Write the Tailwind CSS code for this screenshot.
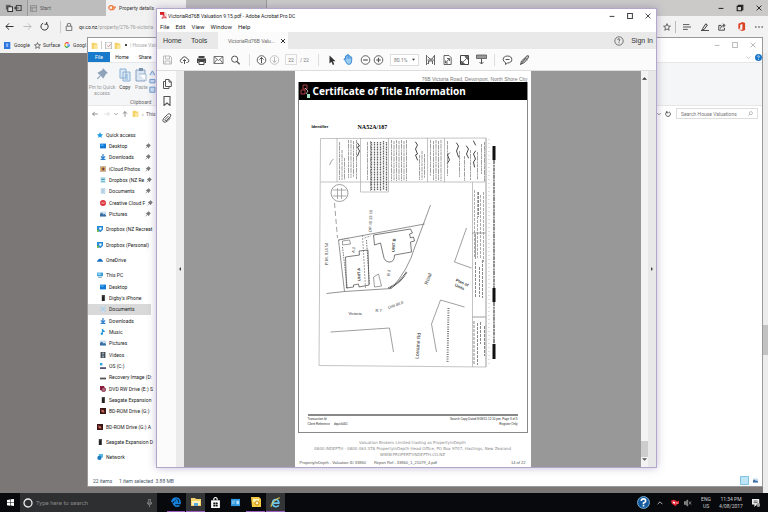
<!DOCTYPE html>
<html lang="en">
<head>
<meta charset="utf-8">
<title>Desktop</title>
<script src="https://cdn.jsdelivr.net/npm/@tailwindcss/browser@4"></script>
</head>
<body class="h-screen overflow-hidden bg-[#7b7777] font-['Roboto','Liberation_Sans',sans-serif] text-[5px] leading-[8px] text-[#222]">
<svg width="0" height="0" class="absolute" aria-hidden="true">
  <defs>
    <symbol id="folder" viewBox="0 0 10 10"><path d="M1 1h4l1 1h3v8H1z" fill="#f3d064"/><path d="M4 4h5v6H4z" fill="#fbe69a"/></symbol>
    <symbol id="back" viewBox="0 0 10 10"><path d="M9.500 5H1M4.500 1.500L1 5l3.500 3.500" fill="none" stroke="currentColor" stroke-width="1.100"/></symbol>
    <symbol id="star" viewBox="0 0 10 10"><path d="M5 .8l1.200 3 3.100.2-2.400 2 .8 3.100L5 7.400 2.300 9.100l.8-3.100-2.400-2 3.100-.2z" fill="none" stroke="currentColor" stroke-width=".9"/></symbol>
    <symbol id="min" viewBox="0 0 10 10"><path d="M2 5.500h6" stroke="currentColor" stroke-width="1.300"/></symbol>
    <symbol id="max" viewBox="0 0 10 10"><path d="M2 2h6v6H2z" fill="none" stroke="currentColor" stroke-width="1.300"/></symbol>
    <symbol id="close" viewBox="0 0 10 10"><path d="M2 2l6 6M8 2L2 8" stroke="currentColor" stroke-width="1.200"/></symbol>
    <symbol id="search" viewBox="0 0 12 12"><circle cx="5" cy="5" r="3.700" fill="none" stroke="currentColor" stroke-width="1.200"/><path d="M7.800 7.800L11 11" stroke="currentColor" stroke-width="1.600"/></symbol>
    <symbol id="pin" viewBox="0 0 10 10"><path d="M6 1l3 3-1 .5L6.500 7 6 8 2 4l1-.5L5.500 2zM3.500 6.500L1 9" fill="currentColor" stroke="currentColor" stroke-width="1"/></symbol>
    <symbol id="desk" viewBox="0 0 10 10"><path d="M0 1h10v8H0z" fill="#1379d3"/><path d="M1 2h5v3H1z" fill="#3ba4ee"/></symbol>
    <symbol id="down" viewBox="0 0 10 10"><path d="M5 0v6M1.500 4L5 7.500 8.500 4M1 9h8" fill="none" stroke="#2d7fcb" stroke-width="2"/></symbol>
    <symbol id="doc" viewBox="0 0 10 10"><path d="M2 0h6v10H2z" fill="#e7f1f8" stroke="#98b8cc" stroke-width=".8"/><path d="M3 3h4M3 5h4M3 7h4" stroke="#5796c4" stroke-width=".8"/></symbol>
    <symbol id="pic" viewBox="0 0 10 10"><path d="M0 1h10v8H0z" fill="#c9dcec"/><path d="M0 9V5l3-2 3 3 2-1 2 2v2z" fill="#376fa6"/></symbol>
    <symbol id="dbx" viewBox="0 0 10 10"><path d="M0 0h10v6L6 10 0 8z" fill="#2389d8"/><path d="M3 2l2 1 2-1 1 3-3 2-1-2z" fill="#fff"/><path d="M0 6h3v4H0z" fill="#79b84b"/></symbol>
    <symbol id="hdd" viewBox="0 0 10 10"><path d="M3 0h5v10H3z" fill="#222"/><path d="M4 1h2v1H4z" fill="#aaa"/></symbol>
    <symbol id="drv" viewBox="0 0 10 10"><path d="M0 6h10v3H0z" fill="#555"/><path d="M1 5h8v1H1z" fill="#b8b8b8"/></symbol>
    <symbol id="bd" viewBox="0 0 10 10"><path d="M0 0h10v10H0z" fill="#3a1717"/><path d="M2 2l4 2 2 3-3 1-3-2z" fill="#b94a3b"/><path d="M4 4h2v2H4z" fill="#e8c6a8"/></symbol>
  </defs>
</svg>

<div class="relative flex h-full flex-col">
  <!-- Edge browser -->
  <section class="flex min-h-0 flex-1 flex-col" aria-label="Browser">
    <div class="flex h-4 shrink-0 items-center bg-[#cbcac9] text-[#555]">
      <div class="flex h-full w-[28px] items-center justify-around border-r border-[#999] bg-[#b9b9b9] px-1">
        <svg class="size-2" viewBox="0 0 10 10"><path d="M1 1h6v6H1z" fill="#666"/><path d="M3.500 3.500h6v6h-6z" fill="#ddd" stroke="#333" stroke-width="1.400"/></svg>
        <svg class="size-2" viewBox="0 0 10 10"><path d="M3 2h6v6H3zM0 5h6M3 3L1 5l2 2" fill="none" stroke="#444" stroke-width="1.300"/></svg>
      </div>
      <div class="flex h-full w-[78px] items-center gap-[3px] bg-[#bdbdbd] px-[2px]">
        <svg class="size-[7px]" viewBox="0 0 10 10"><path d="M.5 1h9v8h-9zM.5 4h9M3 4v5" fill="none" stroke="#777"/></svg>
        <span>Start</span>
      </div>
      <div class="flex h-full w-[80px] items-center gap-[3px] overflow-hidden bg-[#f1f1f1] px-[2px] whitespace-nowrap">
        <svg class="size-2 shrink-0" viewBox="0 0 10 10"><path d="M1 5q0-3 3-3t2 3-3 2-2-2M5 7q2 1 4-3H5" fill="none" stroke="#ee7d40" stroke-width="1.500"/></svg>
        <span class="text-[#333]">Property details</span>
      </div>
      <div class="h-full w-[81px] border-r border-[#999] bg-[#bdbdbd]"></div>
      <div class="ml-auto flex gap-[11px] pr-[5px] text-[#222]">
        <button aria-label="Minimize"><svg class="size-2"><use href="#min"/></svg></button>
        <button aria-label="Restore"><svg class="size-2" viewBox="0 0 10 10"><path d="M1.500 3h5.500v5.500H1.500zM3 3V1.500h5.500V7H7" fill="none" stroke="currentColor" stroke-width="1.400"/></svg></button>
        <button aria-label="Close"><svg class="size-2"><use href="#close"/></svg></button>
      </div>
    </div>
    <div class="flex h-[21px] shrink-0 items-center bg-[#f2f2f2] px-[5px] text-[#333]">
      <button aria-label="Back"><svg class="size-[9px]"><use href="#back"/></svg></button>
      <button aria-label="Forward" class="ml-[9px] text-[#bbb]"><svg class="size-[9px] rotate-180"><use href="#back"/></svg></button>
      <button aria-label="Refresh" class="ml-2"><svg class="size-[9px]" viewBox="0 0 10 10"><path d="M3.500 1.300A4 4 0 1 0 7 1.500M7.500 0v2.500H5" fill="none" stroke="currentColor" stroke-width="1.100"/></svg></button>
      <span class="ml-[11px] h-3 w-px bg-[#ccc]"></span>
      <svg class="ml-1 size-2" viewBox="0 0 10 10"><path d="M1.500 4h7v5.500h-7zM3 4V1q2-1.500 4 0v3" fill="none" stroke="#666" stroke-width="1.100"/></svg>
      <a href="#" class="ml-[6px] text-[#222]">qv.co.nz<span class="text-[#999]">/property/276-76-victoria</span></a>
      <div class="ml-auto flex items-center gap-2">
        <svg class="size-2"><use href="#star"/></svg>
        <span class="-mx-1 h-3 w-px bg-[#bbb]"></span>
        <svg class="ml-[3px] size-2" viewBox="0 0 10 10"><path d="M0 2h8M0 5h10M0 8h6" stroke="currentColor"/></svg>
        <svg class="ml-[2px] size-2" viewBox="0 0 10 10"><path d="M2 7l4-6 2 1.500L4 8H1.500L0 9.500h10" fill="none" stroke="currentColor" stroke-width="1.200"/></svg>
        <svg class="ml-px size-2" viewBox="0 0 10 10"><path d="M4 3H1v6h7V6M3 7q0-4 5-4M6 1l3 2-3 2.500" fill="none" stroke="currentColor" stroke-width="1.100"/></svg>
        <svg class="ml-[3px] size-[9px]" viewBox="0 0 10 10"><path d="M1.500 2L6 0l3 1v8l-3 1-4.500-1.500L6 8.700V2.200L3.500 3v4l-2 1z" fill="#dc4326"/></svg>
        <svg class="ml-px size-2" viewBox="0 0 10 10"><path d="M0 5h2M4 5h2M8 5h2" stroke="currentColor" stroke-width="1.300"/></svg>
      </div>
    </div>
    <div class="flex h-4 shrink-0 items-center bg-[#f2f2f2] pl-1 text-[#333]">
      <svg class="size-[7px]" viewBox="0 0 10 10"><path d="M0 0h9v10H0z" fill="#2e76e0"/><path d="M3 2h3v5H3z" fill="#8eb9f7"/></svg>
      <a href="#" class="ml-[3px] w-5">Google</a>
      <svg class="size-[7px]"><use href="#star"/></svg>
      <a href="#" class="ml-[2px] w-[21px]">Surface</a>
      <svg class="size-[6px]" viewBox="0 0 10 10" fill="none" stroke-width="2"><path d="M8 2Q4-.5 2 3" stroke="#e44"/><path d="M2 3q-1 2 0 4" stroke="#f5b400"/><path d="M2 7q2 3 5 1" stroke="#3a4"/><path d="M5 5h4q0 2-2 3" stroke="#48f"/></svg>
      <a href="#" class="ml-[3px]">Googl</a>
    </div>
    <div class="flex min-h-0 flex-1 flex-col items-end bg-[#7b7777]">
      <div class="flex w-[5px] flex-1 flex-col bg-[#ececec] pt-[272px]"><span class="h-[30px] bg-[#c2c2c2]"></span></div>
    </div>
  </section>

  <!-- Taskbar -->
  <footer class="flex h-[19px] shrink-0 items-center bg-[#08090c] text-[#ccc]">
    <button aria-label="Start" class="flex h-full w-5 items-center justify-center"><svg class="size-[7px]" viewBox="0 0 10 10"><path d="M0 1.300l4.500-.7v4.200H0zM5.200.5L10 0v4.800H5.200zM0 5.400h4.500v4.200L0 9zM5.200 5.400H10V10l-4.800-.6z" fill="#fff"/></svg></button>
    <div class="flex h-full w-[137px] items-center bg-[#2e2f31] px-[3px]">
      <svg class="size-[10px]" viewBox="0 0 10 10"><circle cx="5" cy="5" r="4" fill="none" stroke="#eee" stroke-width="1.300"/></svg>
      <input aria-label="Type here to search" placeholder="Type here to search" class="ml-[3px] min-w-0 flex-1 bg-transparent text-[6px] placeholder:text-[#888]">
      <svg class="mr-[2px] h-2 w-[5px]" viewBox="0 0 6 10"><path d="M2 0h2v6H2zM.5 4v2q2.500 3 5 0V4M3 8v2" fill="none" stroke="#aaa" stroke-width=".8"/></svg>
    </div>
    <nav class="ml-[10px] flex h-full gap-px">
      <button aria-label="Edge" class="flex w-[18px] items-center justify-center border-b border-[#9a5fc0]"><svg class="size-[10px]" viewBox="0 0 10 10"><path d="M8.500 8.500Q4 10.500 2.500 6.500H9Q9.300 1 5 1 1.500 1 .8 5 3 2.200 5 2.800 6.500 3.300 6.500 5H3" fill="none" stroke="#1580dc" stroke-width="1.700"/></svg></button>
      <button aria-label="File Explorer" class="flex w-[19px] items-center justify-center border-b border-[#9a5fc0] bg-[#333436]"><svg class="size-[10px]" viewBox="0 0 10 10"><path d="M0 1h4l1 1h5v7H0z" fill="#f5d56b"/><path d="M1 4h8v4H1z" fill="#fcf1bd"/><path d="M3 6h4v3H3z" fill="#5ba9d8"/></svg></button>
      <button aria-label="Store" class="flex w-[19px] items-center justify-center"><svg class="size-[11px]" viewBox="0 0 10 10"><path d="M1 3h8v7H1z" fill="#fff"/><path d="M3.500 3V1.500Q5-.5 6.500 1.500V3" fill="none" stroke="#fff"/><path d="M3 5h1.800v1.700H3zM5.200 5H7v1.700H5.200zM3 7h1.800v1.700H3zM5.200 7H7v1.700H5.200z" fill="#111"/></svg></button>
      <button aria-label="Mail" class="flex w-[19px] items-center justify-center"><svg class="size-[9px]" viewBox="0 0 10 10"><path d="M0 1h10v8H0z" fill="#2f97df"/><path d="M1 3h4v1H1zM1 5h3v1H1zM6 3h3v4H6z" fill="#b4ddf8"/></svg></button>
      <button aria-label="Outlook" class="flex w-[19px] items-center justify-center border-b border-[#9a5fc0]"><svg class="size-[10px]" viewBox="0 0 10 10"><path d="M0 0h8l2 2v8H1z" fill="#f6c944"/><path d="M2 2h6v3H2z" fill="#fff3b5"/><circle cx="6" cy="6" r="2" fill="#fdf0b8" stroke="#c58d18"/></svg></button>
      <button aria-label="Internet Explorer" class="flex w-[19px] items-center justify-center border-b border-[#9a5fc0] bg-[#333436]"><svg class="size-[11px]" viewBox="0 0 10 10"><path d="M8 7.500Q6.500 9.300 4.500 8.700 2.300 8 2.300 5.500 2.500 2.500 5 2.300 8 2.300 8 5.500H3" fill="none" stroke="#67c7ef" stroke-width="1.500"/><path d="M1 9Q0 7 4 3.500T9 1" fill="none" stroke="#f0d24a" stroke-width=".9"/></svg></button>
    </nav>
    <div class="ml-auto flex h-full items-center gap-1 pr-2 leading-[7px]">
      <svg class="size-[13px]" viewBox="0 0 12 12"><circle cx="6" cy="6" r="5.500" fill="#155c9f" stroke="#8dbbe0" stroke-width=".8"/><path d="M4 4.500Q4 2.700 6 2.700T8 4.500Q8 5.500 6 6.500v1M6 8.300v1.500" fill="none" stroke="#fff" stroke-width="1.500"/></svg>
      <svg class="ml-[3px] size-[6px]" viewBox="0 0 10 10"><path d="M1 7l4-4 4 4" fill="none" stroke="#ccc" stroke-width="1.400"/></svg>
      <svg class="ml-1 size-2" viewBox="0 0 10 10"><path d="M0 2l4-1 4 2 2-1v4L7 7l-1 2-5-3z" fill="#e32a36"/><path d="M3 3l2 1v2L2 5zM6 5l2-1v2z" fill="#fff"/></svg>
      <svg class="ml-px size-2" viewBox="0 0 10 10"><path d="M0 3.500h2L4.500 1v8L2 6.500H0zM6 3l3 4M9 3L6 7" fill="#777" stroke="#999" stroke-width=".9"/></svg>
      <div class="ml-[5px] w-[10px] text-center">ENG<br>US</div>
      <div class="ml-1 w-6 text-center">11:34&nbsp;PM<br>4/08/2017</div>
      <svg class="ml-[5px] size-2" viewBox="0 0 10 10"><path d="M0 0h9v7H6L3 10V7H0z" fill="#eee"/><path d="M2 2.500h5M2 4.500h5" stroke="#444"/><circle cx="8" cy="7.500" r="2.400" fill="#999"/></svg>
    </div>
  </footer>

  <!-- File Explorer window -->
  <section class="absolute top-[37px] right-[5px] bottom-[25px] left-[87px] flex flex-col border border-[#999] bg-white" aria-label="File Explorer">
    <div class="flex h-[14px] items-center pl-[3px] text-[#aaa]">
      <svg class="size-[7px]"><use href="#folder"/></svg><span class="mx-[3px] h-2 w-px bg-[#ccc]"></span>
      <svg class="size-[7px]" viewBox="0 0 10 10"><path d="M1 0h8v10H1z" fill="#fff" stroke="#999"/><path d="M3 5l2 2 3-4" fill="none" stroke="#c66"/></svg>
      <svg class="ml-[2px] size-[7px]"><use href="#folder"/></svg>
      <span class="ml-1 size-[2px] bg-[#444]"></span><span class="ml-[3px] whitespace-nowrap">| House Valu</span>
      <div class="ml-auto flex gap-[10px] pr-[5px] text-[#bbb]">
        <button aria-label="Minimize"><svg class="size-2"><use href="#min"/></svg></button>
        <button aria-label="Maximize"><svg class="size-2"><use href="#max"/></svg></button>
        <button aria-label="Close"><svg class="size-2"><use href="#close"/></svg></button>
      </div>
    </div>
    <div class="flex h-[10px] items-center">
      <button class="h-full w-[22px] bg-[#1979ca] text-white">File</button>
      <button class="h-full w-6">Home</button>
      <button class="h-full w-[22px]">Share</button>
      <svg class="mr-1 ml-auto size-[5px]" viewBox="0 0 10 10"><path d="M1 3l4 4 4-4" fill="none" stroke="#999"/></svg>
      <svg class="size-[7px]" viewBox="0 0 10 10"><circle cx="5" cy="5" r="5" fill="#1976c9"/><path d="M3.500 4Q4 2 5.500 2.500T5 6M5 7v1.200" fill="none" stroke="#fff"/></svg>
    </div>
    <div class="flex h-11 border-y border-[#e6e7e8] bg-[#f5f6f7] pt-[5px] leading-[6px] text-[#999]">
      <div class="flex w-[28px] flex-col items-center text-center"><svg class="size-3 text-[#8ea3ba]"><use href="#pin"/></svg><span class="mt-1 whitespace-nowrap">Pin to Quick<br>access</span></div>
      <div class="flex w-[40px] flex-col">
        <div class="flex">
          <div class="flex w-[18px] flex-col items-center text-[#333]"><svg class="h-[14px] w-3" viewBox="0 0 12 14"><path d="M1 1h6v9H1zM4 4h7v9H4z" fill="#dceaf7" stroke="#8bb0d3"/><path d="M6 7h3M6 9h3M6 11h3" stroke="#8bb0d3"/></svg><span class="mt-[2px]">Copy</span></div>
          <div class="flex w-4 flex-col items-center"><svg class="h-[14px] w-3" viewBox="0 0 12 14"><path d="M1 2h9v11H1z" fill="#dbe6f3" stroke="#8ba2be"/><path d="M4 0h4v3H4z" fill="#7b91ad"/><path d="M4 6h7v7" fill="#fff" stroke="#9bb4cf"/></svg><span class="mt-[2px]">Paste</span></div>
          <svg class="h-7 w-[7px]" viewBox="0 0 8 28"><path d="M1 6l3-5 3 5M1 11h6v4H1zM1 20h6v6H1z" fill="#cfe0f2" stroke="#5f91c4"/></svg>
        </div>
        <span class="mt-[3px] pl-[14px] text-[#666]">Clipboard</span>
      </div>
    </div>
    <div class="flex h-[15px] shrink-0 items-center pl-1 text-[#555]">
      <svg class="size-[6px]"><use href="#back"/></svg>
      <svg class="ml-[6px] size-[6px] rotate-180 text-[#ccc]"><use href="#back"/></svg>
      <svg class="ml-1 size-1" viewBox="0 0 10 10"><path d="M1 3l4 4 4-4" fill="none" stroke="#888" stroke-width="2"/></svg>
      <svg class="ml-1 size-[6px] rotate-90"><use href="#back"/></svg>
      <svg class="ml-1 size-[7px]"><use href="#folder"/></svg>
      <span class="ml-[3px] whitespace-nowrap">› &nbsp;This</span>
      <span class="ml-auto flex items-center gap-1"><svg class="size-1" viewBox="0 0 10 10"><path d="M1 3l4 4 4-4" fill="none" stroke="#666" stroke-width="2"/></svg>
      <svg class="size-[6px]" viewBox="0 0 10 10"><path d="M3.500 1.300A4 4 0 1 0 7 1.500M3 0v3h3" fill="none" stroke="#444" stroke-width="1.500"/></svg></span>
      <label class="mr-1 ml-[5px] flex h-[11px] w-[82px] items-center border border-[#ddd] px-1">
        <input aria-label="Search House Valuations" placeholder="Search House Valuations" class="min-w-0 flex-1 placeholder:text-[#777]">
        <svg class="size-[5px] -scale-x-100 text-[#888]"><use href="#search"/></svg>
      </label>
    </div>
    <ul class="mt-[8px] flex min-h-0 w-[63px] flex-1 flex-col whitespace-nowrap [&>li]:flex [&>li]:min-h-0 [&>li]:flex-1 [&>li]:items-center [&>li]:gap-[3px] [&>li]:pl-3 [&_svg]:size-[6px] [&_svg]:shrink-0">
      <li class="-ml-[3px]"><svg viewBox="0 0 10 10"><path d="M5 0l1.500 3.500L10 4 7.500 6.500 8 10 5 8 2 10l.5-3.500L0 4l3.500-.5z" fill="#2b9be5"/></svg>Quick access</li>
      <li><svg><use href="#desk"/></svg>Desktop<svg class="ml-auto text-[#777]"><use href="#pin"/></svg></li>
      <li><svg><use href="#down"/></svg>Downloads<svg class="ml-auto text-[#777]"><use href="#pin"/></svg></li>
      <li><svg viewBox="0 0 10 10"><path d="M0 0h10v10H0z" fill="#c9b9a7"/><circle cx="5" cy="5" r="3.500" fill="#e29422"/><path d="M4 3h3v4H4z" fill="#5b3a6a"/></svg>iCloud Photos<svg class="ml-auto text-[#777]"><use href="#pin"/></svg></li>
      <li><svg viewBox="0 0 10 10"><path d="M1 0h8v10H1z" fill="#b9dfe9"/><path d="M2 3h6v2H2zM2 7h6v1H2z" fill="#4a9ebf"/></svg>Dropbox (NZ Re<svg class="-ml-px text-[#777]"><use href="#pin"/></svg></li>
      <li><svg><use href="#doc"/></svg>Documents<svg class="ml-auto text-[#777]"><use href="#pin"/></svg></li>
      <li><svg viewBox="0 0 10 10"><circle cx="5" cy="5" r="5" fill="#dd3540"/><path d="M2 6q1-3 3-1t3-1" fill="none" stroke="#fff"/></svg>Creative Cloud F<svg class="-ml-px text-[#777]"><use href="#pin"/></svg></li>
      <li><svg><use href="#pic"/></svg>Pictures<svg class="ml-auto text-[#777]"><use href="#pin"/></svg></li>
      <li class="mt-1 -ml-[3px]"><svg><use href="#dbx"/></svg>Dropbox (NZ Recreat</li>
      <li class="mt-1 -ml-[3px]"><svg><use href="#dbx"/></svg>Dropbox (Personal)</li>
      <li class="mt-1 -ml-[3px]"><svg viewBox="0 0 10 10"><path d="M0 8q0-3 2-3 1-3 4-2 2 0 2 2 2 0 2 3z" fill="#1670bd"/></svg>OneDrive</li>
      <li class="mt-1 -ml-[3px]"><svg viewBox="0 0 10 10"><path d="M0 1h10v6H0z" fill="#39a0d8"/><path d="M1 2h5v3H1z" fill="#92d4f4"/><path d="M2 8h6v1.500H2z" fill="#6790a8"/></svg>This PC</li>
      <li><svg><use href="#desk"/></svg>Desktop</li>
      <li><svg><use href="#hdd"/></svg>Digby's iPhone</li>
      <li class="bg-[#d9d9d9]"><svg><use href="#doc"/></svg>Documents</li>
      <li><svg><use href="#down"/></svg>Downloads</li>
      <li><svg viewBox="0 0 10 10"><path d="M4 8V0q1 3 4 4" fill="none" stroke="#2699dc" stroke-width="1.800"/><circle cx="3" cy="8" r="2" fill="#2699dc"/></svg>Music</li>
      <li><svg><use href="#pic"/></svg>Pictures</li>
      <li><svg viewBox="0 0 10 10"><path d="M1 0h8v10H1z" fill="#3c4247"/><path d="M3 1h4v3H3zM3 6h4v3H3z" fill="#8fa3b3"/></svg>Videos</li>
      <li><svg viewBox="0 0 10 10"><path d="M0 0h4v4H0z" fill="#2ba5dd"/><path d="M0 7h10v3H0z" fill="#557"/></svg>OS (C:)</li>
      <li><svg><use href="#drv"/></svg>Recovery Image (D:</li>
      <li><svg viewBox="0 0 10 10"><path d="M0 0h7v7H0z" fill="#8b1d3c"/><circle cx="6" cy="6" r="3.500" fill="#b9637c" stroke="#5e1329"/></svg>DVD RW Drive (E:) S</li>
      <li><svg><use href="#hdd"/></svg>Seagate Expansion</li>
      <li><svg><use href="#bd"/></svg>BD-ROM Drive (G:)</li>
      <li class="mt-1 -ml-[3px]"><svg><use href="#bd"/></svg>BD-ROM Drive (G:) A</li>
      <li class="mt-1 -ml-[3px]"><svg><use href="#hdd"/></svg>Seagate Expansion D</li>
      <li class="mt-1 -ml-[3px]"><svg viewBox="0 0 10 10"><path d="M3 0h7v6H3z" fill="#54b6e6"/><circle cx="4" cy="6.500" r="3.500" fill="#1d78bd"/></svg>Network</li>
    </ul>
    <div class="mt-3 flex h-[11px] shrink-0 items-center pr-1 pl-[5px] text-[#456]">
      <span class="w-[26px]">22 items</span><span>1 item selected&nbsp; 3.88 MB</span>
      <span class="ml-auto flex items-center gap-1"><svg class="size-[9px]" viewBox="0 0 9 9"><path d="M.5.500h8v8h-8z" fill="#bfe4f5" stroke="#7dc3e4"/></svg><svg class="size-[5px]"><use href="#pic"/></svg></span>
    </div>
  </section>

  <!-- Acrobat window -->
  <section class="absolute top-[8px] right-[111px] bottom-[44px] left-[156px] flex flex-col border border-[#b3a6cc] bg-white shadow-[0_0_8px_rgba(90,70,130,0.35)]" aria-label="Adobe Acrobat Pro DC">
    <div class="flex h-[13px] shrink-0 items-center pl-[3px]">
      <svg class="size-[7px]" viewBox="0 0 10 10"><path d="M2 0h6l2 2v8H2z" fill="#f3dcdc"/><path d="M0 0h6v4H0z" fill="#d51f26"/><path d="M3 9q3-3 2-6 1 4 4 5-3-1-6 1" fill="none" stroke="#d51f26"/></svg>
      <h1 class="ml-px text-[#222]">VictoriaRd76B Valuation 9.15.pdf - Adobe Acrobat Pro DC</h1>
      <div class="ml-auto flex gap-[10px] pr-1 text-[#444]">
        <button aria-label="Minimize"><svg class="size-2"><use href="#min"/></svg></button>
        <button aria-label="Maximize"><svg class="size-2"><use href="#max"/></svg></button>
        <button aria-label="Close"><svg class="size-2"><use href="#close"/></svg></button>
      </div>
    </div>
    <nav class="flex h-[10px] shrink-0 items-center gap-[6px] pl-[3px] text-[6px] text-[#222]">
      <button>File</button><button>Edit</button><button>View</button><button>Window</button><button>Help</button>
    </nav>
    <div class="flex h-[17px] shrink-0 items-center bg-[#e9e9e9] font-['Liberation_Sans',sans-serif] text-[7px] text-[#333]">
      <button class="ml-[6px] w-[28px] text-left">Home</button>
      <button class="w-[27px] text-left">Tools</button>
      <button class="flex h-full w-[70px] items-center gap-[6px] bg-[#fbfbfb] pl-[10px] text-[5px] whitespace-nowrap text-[#666]"><span>VictoriaRd76B Valu...</span><svg class="size-1 text-[#333]" viewBox="2 2 6 6"><path d="M2 2l6 6M8 2L2 8" stroke="currentColor" stroke-width="1.500"/></svg></button>
      <svg class="ml-auto size-[10px]" viewBox="0 0 10 10"><circle cx="5" cy="5" r="4.200" fill="none" stroke="#555" stroke-width=".8"/><path d="M3.800 4Q4 2.500 5.200 2.700T5 5.500M5 6.300v1" fill="none" stroke="#555" stroke-width=".9"/></svg>
      <button class="mr-[3px] ml-[7px]">Sign In</button>
    </div>
    <div class="flex h-[22px] shrink-0 items-center border-b border-[#ddd] bg-[#fbfbfb] pl-[2px] text-[#555] [&>svg]:shrink-0">
      <svg class="h-[10px] w-[17px] text-[#bbb]" viewBox="0 0 10 10"><path d="M1 1h6.500L9 2.500V9H1zM3 1v3h4V1M2.500 9V6h5v3" fill="none" stroke="currentColor"/></svg>
      <svg class="h-[10px] w-[17px]" viewBox="0 0 10 10"><path d="M3 7.500H2Q.5 7 .8 5.200 1.200 4 2.300 4 3 1.800 5 1.800T7.800 4Q9.300 4 9.300 5.700T8 7.500H7M5 9V4.700M3.500 6L5 4.500 6.500 6" fill="none" stroke="currentColor"/></svg>
      <svg class="h-[10px] w-[17px]" viewBox="0 0 10 10"><path d="M2 1h6v2H2zM.5 3.500h9V8H8V6H2v2H.5z" fill="#444"/><path d="M2.500 6.500h5v3h-5z" fill="#fff" stroke="#444"/></svg>
      <svg class="h-[10px] w-[17px]" viewBox="0 0 10 10"><path d="M.5 1.500h9v7h-9zM.5 1.500L5 5.500l4.500-4M.5 8.500l3-4M9.500 8.500l-3-4" fill="none" stroke="currentColor" stroke-width=".8"/></svg>
      <svg class="h-[10px] w-[17px]"><use href="#search"/></svg>
      <span class="mx-[5px] h-3 w-px bg-[#ddd]"></span>
      <svg class="h-[10px] w-[13px]" viewBox="0 0 10 10"><circle cx="5" cy="5" r="4.300" fill="none" stroke="currentColor" stroke-width=".9"/><path d="M5 8V2.500M3 4.500l2-2 2 2" fill="none" stroke="currentColor"/></svg>
      <svg class="h-[10px] w-[13px] text-[#bbb]" viewBox="0 0 10 10"><circle cx="5" cy="5" r="4.300" fill="none" stroke="currentColor" stroke-width=".9"/><path d="M5 2v5.500M3 5.500l2 2 2-2" fill="none" stroke="currentColor"/></svg>
      <input aria-label="Page number" value="22" class="ml-1 h-[11px] w-3 border border-[#ddd] text-center text-[#777]"><span class="ml-[3px] w-3 whitespace-nowrap text-[#777]">/ 22</span>
      <span class="mx-1 ml-[6px] h-3 w-px bg-[#ddd]"></span>
      <svg class="h-[10px] w-[17px]" viewBox="0 0 10 10"><path d="M3 .5v8l2-1.800L6.300 10l1.500-.7-1.400-3H9z" fill="#333"/></svg>
      <svg class="h-[11px] w-[17px]" viewBox="0 0 11 11"><path d="M2.500 7L.8 5q.5-1 1.700.3V2q.8-1 1.500 0V.800q.8-.8 1.500 0V2Q6.300 1 7 2v1.200q1-1 1.700 0V7Q8.500 10.500 5.700 10.500 3.500 10.300 2.500 7z" fill="#9acbf2" stroke="#2f86d3" stroke-width=".9"/><path d="M4 2v3M5.500 2v3M7 3v2" stroke="#2f86d3" stroke-width=".6"/></svg>
      <svg class="ml-[2px] h-[10px] w-[13px]" viewBox="0 0 10 10"><circle cx="5" cy="5" r="4.300" fill="none" stroke="currentColor" stroke-width=".9"/><path d="M2.700 5h4.600" stroke="currentColor" stroke-width="1.200"/></svg>
      <svg class="h-[10px] w-[13px]" viewBox="0 0 10 10"><circle cx="5" cy="5" r="4.300" fill="none" stroke="currentColor" stroke-width=".9"/><path d="M2.700 5h4.600M5 2.700v4.600" stroke="currentColor" stroke-width="1.200"/></svg>
      <span class="ml-[5px] flex h-3 w-[29px] shrink-0 items-center border border-[#ddd] bg-white px-[3px]">
        <select aria-label="Zoom" class="min-w-0 flex-1 appearance-none text-[#777]"><option>80.1%</option></select>
        <svg class="size-[3px]" viewBox="0 0 4 4"><path d="M0 1h4L2 3.500z" fill="#333"/></svg>
      </span>
      <svg class="ml-[3px] h-[10px] w-[17px]" viewBox="0 0 10 10"><path d="M1 0v10M9 0v10M2 1.500L4.500 4h2L8.500 1M2 5h7M3 9V6h4v3M2 9l1.500-2" fill="none" stroke="#555" stroke-width=".9"/></svg>
      <svg class="h-[10px] w-[17px]" viewBox="0 0 10 10"><path d="M1.500.5h5L8.700 2.700v6.800H1.500zM3 8l4-4.500M4.500 3.500H7V6M3 5.500V8h2.500" fill="none" stroke="#555" stroke-width=".9"/></svg>
      <svg class="h-[10px] w-[17px]" viewBox="0 0 10 10"><path d="M1 .5h8v9H1z" fill="none" stroke="#444"/><path d="M5.500 1.500H8v3zM2 6v3h3zM3 7.500l4-4" fill="#555" stroke="#555" stroke-width=".8"/></svg>
      <svg class="h-[11px] w-[17px]" viewBox="0 0 11 11"><path d="M.5 1h10v3.500H.5z" fill="#999" stroke="#555" stroke-width=".8"/><path d="M5.500 5v5M3.500 8l2 2 2-2" fill="none" stroke="#555"/></svg>
      <span class="mx-1 h-3 w-px bg-[#ddd]"></span>
      <svg class="h-[10px] w-[17px]" viewBox="0 0 10 10"><path d="M5 1q4.300.2 4.300 3.500T5 8L3 9.500 3 7.500Q.7 6.500.7 4.500.7 1.200 5 1zM3 4.500h4" fill="none" stroke="#555"/></svg>
      <svg class="h-[10px] w-[17px]" viewBox="0 0 10 10"><path d="M1 9.500l1-3.500L7.500.8q2-.8 1.700 1.400L5 7.500zM1 9.500L5.500 4M5.500 3L8 5" fill="#bbb" stroke="#555" stroke-width=".9"/></svg>
    </div>
    <div class="flex min-h-0 flex-1">
      <aside class="flex w-[19px] flex-col items-center gap-[7px] bg-[#fbfbfb] pt-2 text-[#555]">
        <svg class="size-[10px]" viewBox="0 0 10 10"><path d="M3.500.5h3.500L9.300 3v4.500H3.500zM7 .5V3h2.300M3.500 2.500h-2v7H7v-2" fill="none" stroke="currentColor"/></svg>
        <svg class="size-[10px]" viewBox="0 0 10 10"><path d="M2 .5h6v9L5 7 2 9.500z" fill="none" stroke="currentColor" stroke-width="1.100"/></svg>
        <svg class="size-[10px]" viewBox="0 0 10 10"><path d="M6.500 3L3 6.500q-.3 1.500 1.200 1.200L8.500 3.500Q9.500 1.500 8 1 6.500.3 5.500 1.500L1.500 5.500Q0 8 1.700 9 3.500 9.800 5 8.300L8.500 5" fill="none" stroke="currentColor"/></svg>
      </aside>
      <div class="flex w-2 items-center justify-center bg-[#ebebeb]"><svg class="size-1" viewBox="0 0 4 4"><path d="M3 0v4L1 2z" fill="#444"/></svg></div>
      <main class="min-w-0 flex-1 overflow-hidden bg-[#989898]">
        <article class="mx-auto flex h-full w-[236px] flex-col bg-white px-[3px] pt-[5px] font-['DejaVu_Sans',sans-serif] text-[4px] leading-[6px] text-[#888]">
          <p class="text-right font-['Liberation_Sans',sans-serif] text-[5px] text-[#777]">76B Victoria Road, Devonport, North Shore City</p>
          <div class="flex min-h-0 flex-1 flex-col border border-t-0 border-[#888]">
            <h2 class="flex h-[18px] shrink-0 items-center gap-[2px] bg-black pl-px font-['Noto_Sans','Open_Sans',sans-serif] text-[10px] leading-[16px] font-bold text-white">
              <svg class="h-[15px] w-[11px]" viewBox="0 0 11 15"><path d="M3 1h4v4H3zM1 6h4v4H1z" fill="none" stroke="#aa3e42"/><path d="M5 4l3 3-2 3" fill="none" stroke="#aaa"/><path d="M7 10h3v4H7z" fill="#a2e4c5"/></svg>Certificate of Title Information</h2>
            <div class="mt-6 flex h-[6px] shrink-0 items-center pl-[13px] text-black"><b class="w-[46px] font-['Liberation_Sans',sans-serif]">Identifier</b><b class="font-['Liberation_Serif',serif] text-[6px]">NA52A/187</b></div>
            <svg class="mt-[6px] h-[236px] w-full shrink-0" viewBox="299 136 227 236" fill="none" stroke="#777" stroke-width=".7" font-family="Liberation Sans, sans-serif">
              <path d="M320 138.500L485.500 138V367L318.500 365.500z" stroke="#aaa"/>
              <path d="M320 182H485M336.500 138v44M360 138v54h28v-54M427 138v44M444 138v44M472 182v185M485.500 138V367" stroke="#aaa"/>
              <g stroke="#777" stroke-dasharray="3 .7 5 .8 2 .6"><path d="M339 142v38M341.500 150v30M344 158v22M348 140v38M350.500 140v38M353 141v36M356 140v39"/><path d="M367 142v38M370 141v50M391 140v41M393.500 141v40M396 140v41M398.500 141v40M401 140v41M403.500 141v40M406 140v41M419 155v25M421.500 151v29M424 154v24M430 140v36M433 141v40M435.500 140v41M438 141v40M440.500 140v41M447 141v35M459 151v26M464 156v25M470 150v30M477 152v28M481 144v30M484 142v40"/></g>
              <g stroke="#666" stroke-width="1.300" stroke-dasharray="1 .5 2 .4 .6 .5"><path d="M371 142v48M374 142v49M377 142v48M380 142v49M383 141v49M386 142v49"/></g>
              <g stroke="#333" stroke-width=".9" stroke-linecap="round"><path d="M357 143l2 3-2 1 2 4-2 5M415 142l2 3-2 4 2 5-2 1 2 5M449 153l-2 2 2 5-2 3M456 143l2 3-2 5 2 6M466 146l2 3-2 5 2 4M475 151l-2 3 2 5-2 3 1 5M473 141l2 4"/></g>
              <path d="M329 165l2-4 2-2" />
              <circle cx="339" cy="193" r="8.500"/><path d="M332 190h14M332 196h14M337 188v11M341 188v11" stroke="#888"/>
              <path d="M334 203L337 238" stroke-dasharray="5 3"/>
              <path d="M430 205L414 248Q408 269 391 288.500L344 291.500 338 240 424 224M326 293.500L344 291.500" stroke="#666"/>
              <path d="M338 240l10-2M362 235l3 53M364 238l6-2" stroke-dasharray="2 1"/>
              <path d="M345 257l14-2-.5-4 9-1 1 35-10 2-.5-3-5 1v2l-7 1z" stroke="#444"/>
              <path d="M373 235l37-6 2 4-3 1 1 4 3-1 1 4-4 1 1 10-17 3q0 7-5 7t-6-6l-3-13-6 2z" stroke="#444"/>
              <path d="M342 241l7-1 1 4-8 1zM373 277l5-3 3 12-7 1z"/>
              <path d="M388 288q11-4 18-16" stroke="#444" stroke-width="1.800" stroke-dasharray="1 .5"/>
              <path d="M342 247l5 42M366 240l3 45" stroke-dasharray="1.500 1" stroke="#444"/>
              <path d="M330 332l59-4 4 24M466 228L454 262l17 6M464 307l-24-7-9 24 5 28" stroke="#777"/>
              <path d="M448 308l-1 54" stroke="#777" stroke-width="2" stroke-dasharray="1 1.300"/>
              <path d="M474 190v68M477 192v66M480 195v64M483 192v70" stroke="#888" stroke-dasharray="3 1"/>
              <path d="M478 192v25M473.500 321v43M477 323v42M480 322v22M484 326v30M475 262v35M479 267v30M482 260v38" stroke="#555" stroke-dasharray="3 1"/>
              <path d="M472 233h13M472 317h13M475 234v25"/>
              <path d="M488.500 139v225" stroke="#aaa" stroke-dasharray="1 3"/>
              <path d="M493.500 160v128M493.500 302v42" stroke="#444" stroke-width="1.200" stroke-dasharray="4 .8 2 .6"/>
              <path d="M493.500 146v14M493.500 288v14M493.500 344v15" stroke="#111" stroke-width="3"/>
              <g fill="#333" stroke="none" font-size="4">
                <text transform="translate(360 281) rotate(-92)" font-weight="bold">UNIT A</text><text transform="translate(394 252) rotate(-85)" font-weight="bold">UNIT B</text>
                <text transform="translate(327 265) rotate(-90)">P. M. 814 54</text><text transform="translate(371 232) rotate(-88)">DP 40 23 16</text>
                <text x="348" y="315">Victoria</text><text x="375" y="312">R 7</text><text transform="translate(388 309) rotate(-20)">Unit 40.0</text>
                <text transform="translate(418 359) rotate(-85)" font-size="5">Lorraine Rd</text><text transform="translate(427 285) rotate(-70)" font-size="5">Road</text>
                <text transform="translate(455 281) rotate(25)" font-weight="bold">Plan of</text><text transform="translate(454 286) rotate(25)" font-weight="bold">Units</text>
                <text transform="translate(354 253) rotate(-80)">A 2</text><text transform="translate(389 276) rotate(-80)">B 2</text>
              </g>
            </svg>
            <div class="mx-[9px] mt-auto mb-[5px] flex justify-between border-t-2 border-[#888] pt-px font-['Liberation_Sans',sans-serif] text-[3px] leading-[5px] text-[#222]">
              <div>Transaction Id<br>Client Reference &nbsp; &nbsp; dquick001</div><div class="text-right">Search Copy Dated 9/09/15 12:10 pm, Page 3 of 3<br>Register Only</div>
            </div>
          </div>
          <footer class="mt-[7px] mb-[1px] shrink-0 text-center text-[#888]">
            <p>Valuation Brokers Limited trading as PropertyInDepth</p>
            <p class="whitespace-nowrap">0800 INDEPTH - 0800 463 378 PropertyInDepth Head Office, PO Box 9707, Hastings, New Zealand</p>
            <p>WWW.PROPERTYINDEPTH.CO.NZ</p>
            <p class="mt-[2px] flex gap-2 px-[2px] font-['Liberation_Sans',sans-serif] text-[#555]"><span>PropertyInDepth - Valuation ID 33860</span><span>Report Ref - 33860_1_21079_4.pdf</span><span class="ml-auto">14 of 22</span></p>
          </footer>
        </article>
      </main>
      <div class="flex w-[7px] flex-col items-center bg-[#f3f3f3] py-[5px]">
        <svg class="size-[5px]" viewBox="0 0 4 4"><path d="M0 3h4L2 1z" fill="#333"/></svg>
        <span class="mt-auto h-4 w-full bg-[#cdcdcd]"></span>
        <svg class="size-[5px]" viewBox="0 0 4 4"><path d="M0 1h4L2 3z" fill="#555"/></svg>
      </div>
      <div class="flex w-2 items-center justify-center bg-[#e8e8e8]"><svg class="size-1" viewBox="0 0 4 4"><path d="M1 0v4L3 2z" fill="#444"/></svg></div>
    </div>
  </section>
</div>
</body>
</html>
